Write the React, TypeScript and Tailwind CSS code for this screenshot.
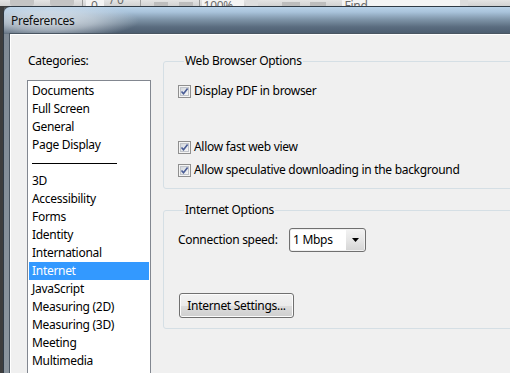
import React from "react";

const categories = [
  "Documents",
  "Full Screen",
  "General",
  "Page Display",
  "-",
  "3D",
  "Accessibility",
  "Forms",
  "Identity",
  "International",
  "Internet",
  "JavaScript",
  "Measuring (2D)",
  "Measuring (3D)",
  "Meeting",
  "Multimedia",
];

const selected = "Internet";

function CheckBox() {
  return (
    <div className="flex h-[13px] w-[13px] shrink-0 items-center justify-center border border-[#8f8f8f] bg-[#f4f4f4]">
      <div className="relative h-[9px] w-[9px] border border-[#c0c4ca] bg-gradient-to-br from-[#d4d8dd] to-[#f6f6f6]">
        <svg
          viewBox="0 0 9 9"
          className="absolute left-[-1px] top-[-1px] h-[9px] w-[9px]"
        >
          <path
            d="M1.5 4.5 L3.5 6.8 L7.6 1.4"
            fill="none"
            stroke="#4a5d96"
            strokeWidth="1.6"
          />
        </svg>
      </div>
    </div>
  );
}

function CheckRow({ label, className = "" }: { label: string; className?: string }) {
  return (
    <div className={`flex h-[20px] items-center gap-[3px] ${className}`}>
      <CheckBox />
      <span>{label}</span>
    </div>
  );
}

function Toolbar() {
  return (
    <div className="flex h-[6px] items-end overflow-hidden bg-gradient-to-b from-[#e4e4e4] to-[#d2d2d2] text-[12px] leading-[12px] text-[#6b6b6b]">
      <div className="ml-[10px] h-[6px] w-[24px] rounded-b-[3px] bg-[#c4c4c4]" />
      <div className="ml-[16px] h-[6px] w-[24px] rounded-b-[3px] bg-[#c4c4c4]" />
      <div className="ml-[8px] h-[6px] w-px bg-[#9a9a9a]" />
      <div className="ml-[3px] h-[6px] w-[18px] bg-[#f4f4f4] pl-[5px]">0</div>
      <span className="ml-[6px]">/ 0</span>
      <div className="ml-[16px] h-[6px] w-px bg-[#a0a0a0]" />
      <div className="ml-[13px] h-[4px] w-[14px] bg-[#bdbdbd]" />
      <div className="ml-[11px] h-[4px] w-[14px] bg-[#bdbdbd]" />
      <div className="ml-[6px] h-[6px] w-px bg-[#9a9a9a]" />
      <div className="ml-[2px] h-[6px] w-[42px] bg-[#f4f4f4] pl-[2px]">100%</div>
      <div className="ml-[2px] h-[6px] w-[12px] bg-[#dedede]" />
      <div className="ml-[24px] h-[4px] w-[18px] bg-[#bdbdbd]" />
      <div className="ml-[10px] h-[4px] w-[16px] bg-[#bdbdbd]" />
      <div className="ml-[16px] h-[6px] w-[118px] bg-[#f4f4f4] pl-[3px]">Find</div>
      <div className="h-[6px] w-[8px] bg-[#dcdcdc]" />
    </div>
  );
}

export default function App() {
  return (
    <div className="flex h-[373px] w-[510px] flex-col overflow-hidden bg-[#3d3d3d] font-['Segoe_UI','Noto_Sans',sans-serif] text-[12px] tracking-[-0.3px] text-black">
      <Toolbar />
      <div className="flex flex-1 pl-[3px]">
        <div className="flex flex-1 flex-col rounded-tl-[7px] border-l border-t border-[#2f3a45] bg-[linear-gradient(to_bottom,#b9d2e8_0px,#a9c3db_5px,#8197ab_12px,#5a6c7f_20px,#4d5e70_26px,#7f8a95_27px,#8b959e_100%)]">
          <div className="flex h-[26px] items-center bg-[radial-gradient(ellipse_90px_18px_at_45px_14px,rgba(228,234,240,0.85)_0%,rgba(228,234,240,0.55)_50%,rgba(228,234,240,0)_100%)] pl-[7px] pt-[2px]">
            <span className="leading-[20px] text-[#101010]">Preferences</span>
          </div>
          <div className="ml-[5px] flex flex-1 border-l border-t border-[#4a5662]">
            <div className="flex flex-1 border-l border-t border-white bg-[#f0f0f0]">
              {/* Left column */}
              <div className="flex flex-col pl-[16px] pt-[17px]">
                <div className="mb-[10px] pl-[1px] leading-[18px]">Categories:</div>
                <div className="w-[124px] flex-1 border border-b-0 border-[#828790] bg-white p-[1px]">
                  {categories.map((c, i) =>
                    c === "-" ? (
                      <div key={i} className="flex h-[18px] items-center px-[3px]">
                        <div className="h-px w-[85px] bg-black" />
                      </div>
                    ) : (
                      <div
                        key={i}
                        className={`h-[18px] px-[3px] leading-[18px] ${
                          c === selected ? "bg-[#3399ff] text-white" : ""
                        }`}
                      >
                        {c}
                      </div>
                    )
                  )}
                </div>
              </div>

              {/* Right column */}
              <div className="ml-[12px] flex flex-col pt-[17px]">
                <fieldset className="w-[380px] rounded-[3px] border border-[#d5dfe5] pb-[8px] pl-[14px]">
                  <legend className="ml-[6px] px-[1px] leading-[18px]">Web Browser Options</legend>
                  <CheckRow label="Display PDF in browser" className="mt-[11px]" />
                  <CheckRow label="Allow fast web view" className="mt-[36px]" />
                  <CheckRow label="Allow speculative downloading in the background" className="mt-[3px]" />
                </fieldset>

                <fieldset className="mt-[12px] w-[380px] rounded-[3px] border border-[#d5dfe5] pb-[10px] pl-[14px]">
                  <legend className="ml-[6px] px-[1px] leading-[18px]">Internet Options</legend>
                  <div className="mt-[9px] flex h-[24px] items-center">
                    <span className="w-[111px]">Connection speed:</span>
                    <div className="flex h-[24px] w-[77px] rounded-[3px] border border-[#707070] bg-[#f0f0f0] p-px">
                      <div className="flex flex-1 items-center bg-white pl-[2px]">1 Mbps</div>
                      <div className="flex w-[18px] items-center justify-center bg-gradient-to-b from-[#f2f2f2] via-[#e6e6e6] to-[#d6d6d6]">
                        <svg viewBox="0 0 7 4" className="h-[4px] w-[7px]">
                          <path d="M0 0 H7 L3.5 4 Z" fill="#000" />
                        </svg>
                      </div>
                    </div>
                  </div>
                  <button className="ml-[1px] mt-[41px] flex h-[25px] w-[115px] items-center justify-center rounded-[3px] border border-[#707070] bg-[linear-gradient(to_bottom,#f2f2f2_0%,#ebebeb_50%,#dddddd_51%,#cfcfcf_100%)] shadow-[inset_0_0_0_1px_#fcfcfc]">
                    Internet Settings...
                  </button>
                </fieldset>
              </div>
            </div>
          </div>
        </div>
      </div>
    </div>
  );
}
